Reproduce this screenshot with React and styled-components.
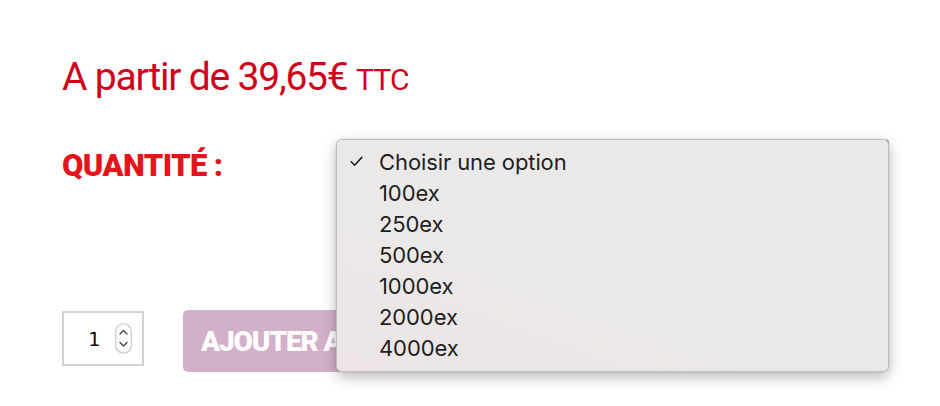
import React from 'react';
import styled, { createGlobalStyle } from 'styled-components';

const GlobalStyle = createGlobalStyle`
    html, body {
        margin: 0;
        padding: 0;
        background: #ffffff;
    }
    body {
        font-family: Roboto, "Liberation Sans", sans-serif;
    }
`;

const Page = styled.div`
    width: 940px;
    height: 406px;
    padding: 54px 0 0 62px;
    box-sizing: border-box;
    overflow: hidden;
`;

const Price = styled.div`
    font-family: Roboto, sans-serif;
    font-size: 39px;
    line-height: 46px;
    height: 46px;
    letter-spacing: -1.2px;
    color: #d0021b;

    small {
        font-size: 30px;
        line-height: 1;
        letter-spacing: -0.8px;
    }
`;

const QuantityRow = styled.div`
    display: flex;
    align-items: flex-start;
    margin-top: 39px;
`;

const Label = styled.div`
    width: 274px;
    margin-top: 7px;
    font-family: Roboto, sans-serif;
    font-weight: 900;
    font-size: 31px;
    line-height: 40px;
    letter-spacing: -0.6px;
    color: #e3141b;
`;

const SelectField = styled.div`
    position: relative;
    width: 553px;
    height: 72px;
    border-right: 2px solid #9a9a9a;
    border-radius: 4px;
    box-sizing: border-box;
`;

const Menu = styled.ul`
    position: absolute;
    top: 0;
    left: 0;
    z-index: 2;
    width: 553px;
    margin: 0;
    padding: 6px 0 8px;
    list-style: none;
    box-sizing: border-box;
    border-radius: 6px;
    border: 1px solid rgba(0, 0, 0, 0.18);
    background: linear-gradient(20deg, #ece4e6 0%, #ebe9e7 35%, #ebe9e7 70%, #eceae8 100%);
    box-shadow: 0 5px 14px rgba(0, 0, 0, 0.28), 0 0 2px rgba(0, 0, 0, 0.15);
`;

const Option = styled.li`
    position: relative;
    height: 31px;
    display: flex;
    align-items: center;
    padding-left: 42px;
    font-family: Inter, "Liberation Sans", sans-serif;
    font-size: 22px;
    color: #1e1e1e;
    letter-spacing: -0.1px;

    svg {
        position: absolute;
        left: 13px;
        top: 10px;
    }
`;

const CartRow = styled.div`
    display: flex;
    align-items: flex-start;
    gap: 39px;
    margin-top: 99px;
`;

const QtyBox = styled.div`
    margin-top: 1px;
    width: 82px;
    height: 55px;
    box-sizing: border-box;
    border: 2px solid #d2d2d2;
    display: flex;
    align-items: center;
    padding-left: 24px;
    gap: 15px;
    background: #fff;

    span {
        font-family: "DejaVu Sans Mono", monospace;
        font-size: 20px;
        color: #111;
    }
`;

const AddButton = styled.button`
    width: 170px;
    height: 62px;
    padding: 0 18px;
    overflow: hidden;
    text-align: left;
    border: none;
    border-radius: 5px;
    background: #d3b0c9;
    color: #ffffff;
    font-family: Roboto, sans-serif;
    font-weight: 900;
    font-size: 28px;
    letter-spacing: -1.1px;
    white-space: nowrap;
`;

function Check() {
    return (
        <svg width="13" height="11" viewBox="0 0 13 11">
            <path d="M1.2 5.8 L4.6 9.2 L11.8 1.4" fill="none" stroke="#222" strokeWidth="1.6" strokeLinecap="round" strokeLinejoin="round" />
        </svg>
    );
}

function Spinner() {
    return (
        <svg width="17" height="31" viewBox="0 0 17 31">
            <rect x="0.75" y="0.75" width="15.5" height="29.5" rx="7.75" fill="#fff" stroke="#c8c8c8" strokeWidth="1.2" />
            <path d="M5 11 L8.5 7.5 L12 11" fill="none" stroke="#444" strokeWidth="1.4" strokeLinecap="round" strokeLinejoin="round" />
            <path d="M5 19.5 L8.5 23 L12 19.5" fill="none" stroke="#444" strokeWidth="1.4" strokeLinecap="round" strokeLinejoin="round" />
        </svg>
    );
}

const options = ['Choisir une option', '100ex', '250ex', '500ex', '1000ex', '2000ex', '4000ex'];

export default function App() {
    return (
        <>
            <GlobalStyle />
            <Page>
                <Price>
                    A partir de 39,65€ <small>TTC</small>
                </Price>
                <QuantityRow>
                    <Label>QUANTITÉ :</Label>
                    <SelectField>
                        <Menu>
                            {options.map((o, i) => (
                                <Option key={o}>
                                    {i === 0 && <Check />}
                                    {o}
                                </Option>
                            ))}
                        </Menu>
                    </SelectField>
                </QuantityRow>
                <CartRow>
                    <QtyBox>
                        <span>1</span>
                        <Spinner />
                    </QtyBox>
                    <AddButton>AJOUTER AU PANIER</AddButton>
                </CartRow>
            </Page>
        </>
    );
}
